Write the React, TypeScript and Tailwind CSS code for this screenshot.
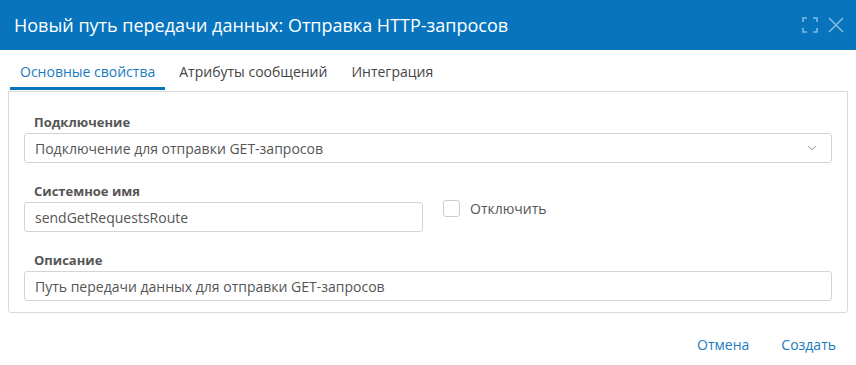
import { ChevronDown } from "lucide-react";

const font = { fontFamily: '"Open Sans", "Noto Sans", sans-serif' };

function Label({ children }: { children: React.ReactNode }) {
  return (
    <div className="h-[18px] pl-[10px] text-[13px] leading-[18px] font-bold text-[#555]">
      {children}
    </div>
  );
}

export default function App() {
  return (
    <div className="w-[856px] h-[365px] bg-white text-[#555]" style={font}>
      {/* Header */}
      <div className="flex h-[50px] items-center justify-between bg-[#0774bd] pl-[14px] pr-[12px]">
        <h1 className="text-[18px] font-normal text-white">
          Новый путь передачи данных: Отправка HTTP-запросов
        </h1>
        <div className="flex items-center gap-[10px] text-white/50">
          <svg width="16" height="16" viewBox="0 0 16 16" fill="none" stroke="currentColor" strokeWidth="1.6">
            <path d="M1 5V1h4M11 1h4v4M15 11v4h-4M5 15H1v-4" />
          </svg>
          <svg width="16" height="16" viewBox="0 0 16 16" fill="none" stroke="currentColor" strokeWidth="1.6">
            <path d="M1 1l14 14M15 1L1 15" />
          </svg>
        </div>
      </div>

      {/* Tabs */}
      <div className="flex px-[10px] pt-[12px]">
        <div className="border-b-[3px] border-[#0774bd] px-[10px] pb-[6px] text-[14px] leading-[19px] text-[#1a7bc0]">
          Основные свойства
        </div>
        <div className="ml-[4px] px-[10px] pb-[6px] text-[14px] leading-[19px] text-[#444]">
          Атрибуты сообщений
        </div>
        <div className="ml-[4px] px-[10px] pb-[6px] text-[14px] leading-[19px] text-[#444]">
          Интеграция
        </div>
      </div>

      {/* Panel */}
      <div className="mx-[8px] mt-[1px] rounded-b-[3px] border border-[#d9d9d9] px-[15px] pt-[21px] pb-[11px]">
        <Label>Подключение</Label>
        <div className="mt-[2px] flex h-[30px] items-center justify-between rounded-[3px] border border-[#d4d4d4] pl-[10px] pr-[12px] text-[14px]">
          <span>Подключение для отправки GET-запросов</span>
          <ChevronDown size={14} strokeWidth={1.5} className="text-[#777]" />
        </div>

        <div className="mt-[19px] flex">
          <div className="w-[399px]">
            <Label>Системное имя</Label>
            <div className="mt-[2px] flex h-[30px] items-center rounded-[3px] border border-[#d4d4d4] pl-[10px] text-[14px]">
              sendGetRequestsRoute
            </div>
          </div>
          <div className="ml-[20px] flex items-center pt-[2px]">
            <div className="h-[17px] w-[17px] rounded-[3px] border border-[#ccc]" />
            <span className="ml-[10px] text-[14px] text-[#555]">Отключить</span>
          </div>
        </div>

        <div className="mt-[19px]">
          <Label>Описание</Label>
          <div className="mt-[2px] flex h-[30px] items-center rounded-[3px] border border-[#d4d4d4] pl-[10px] text-[14px]">
            Путь передачи данных для отправки GET-запросов
          </div>
        </div>
      </div>

      {/* Footer */}
      <div className="flex justify-end gap-[32px] pt-[21px] pr-[20px] text-[14px] text-[#1a7bc0]">
        <button type="button">Отмена</button>
        <button type="button">Создать</button>
      </div>
    </div>
  );
}
